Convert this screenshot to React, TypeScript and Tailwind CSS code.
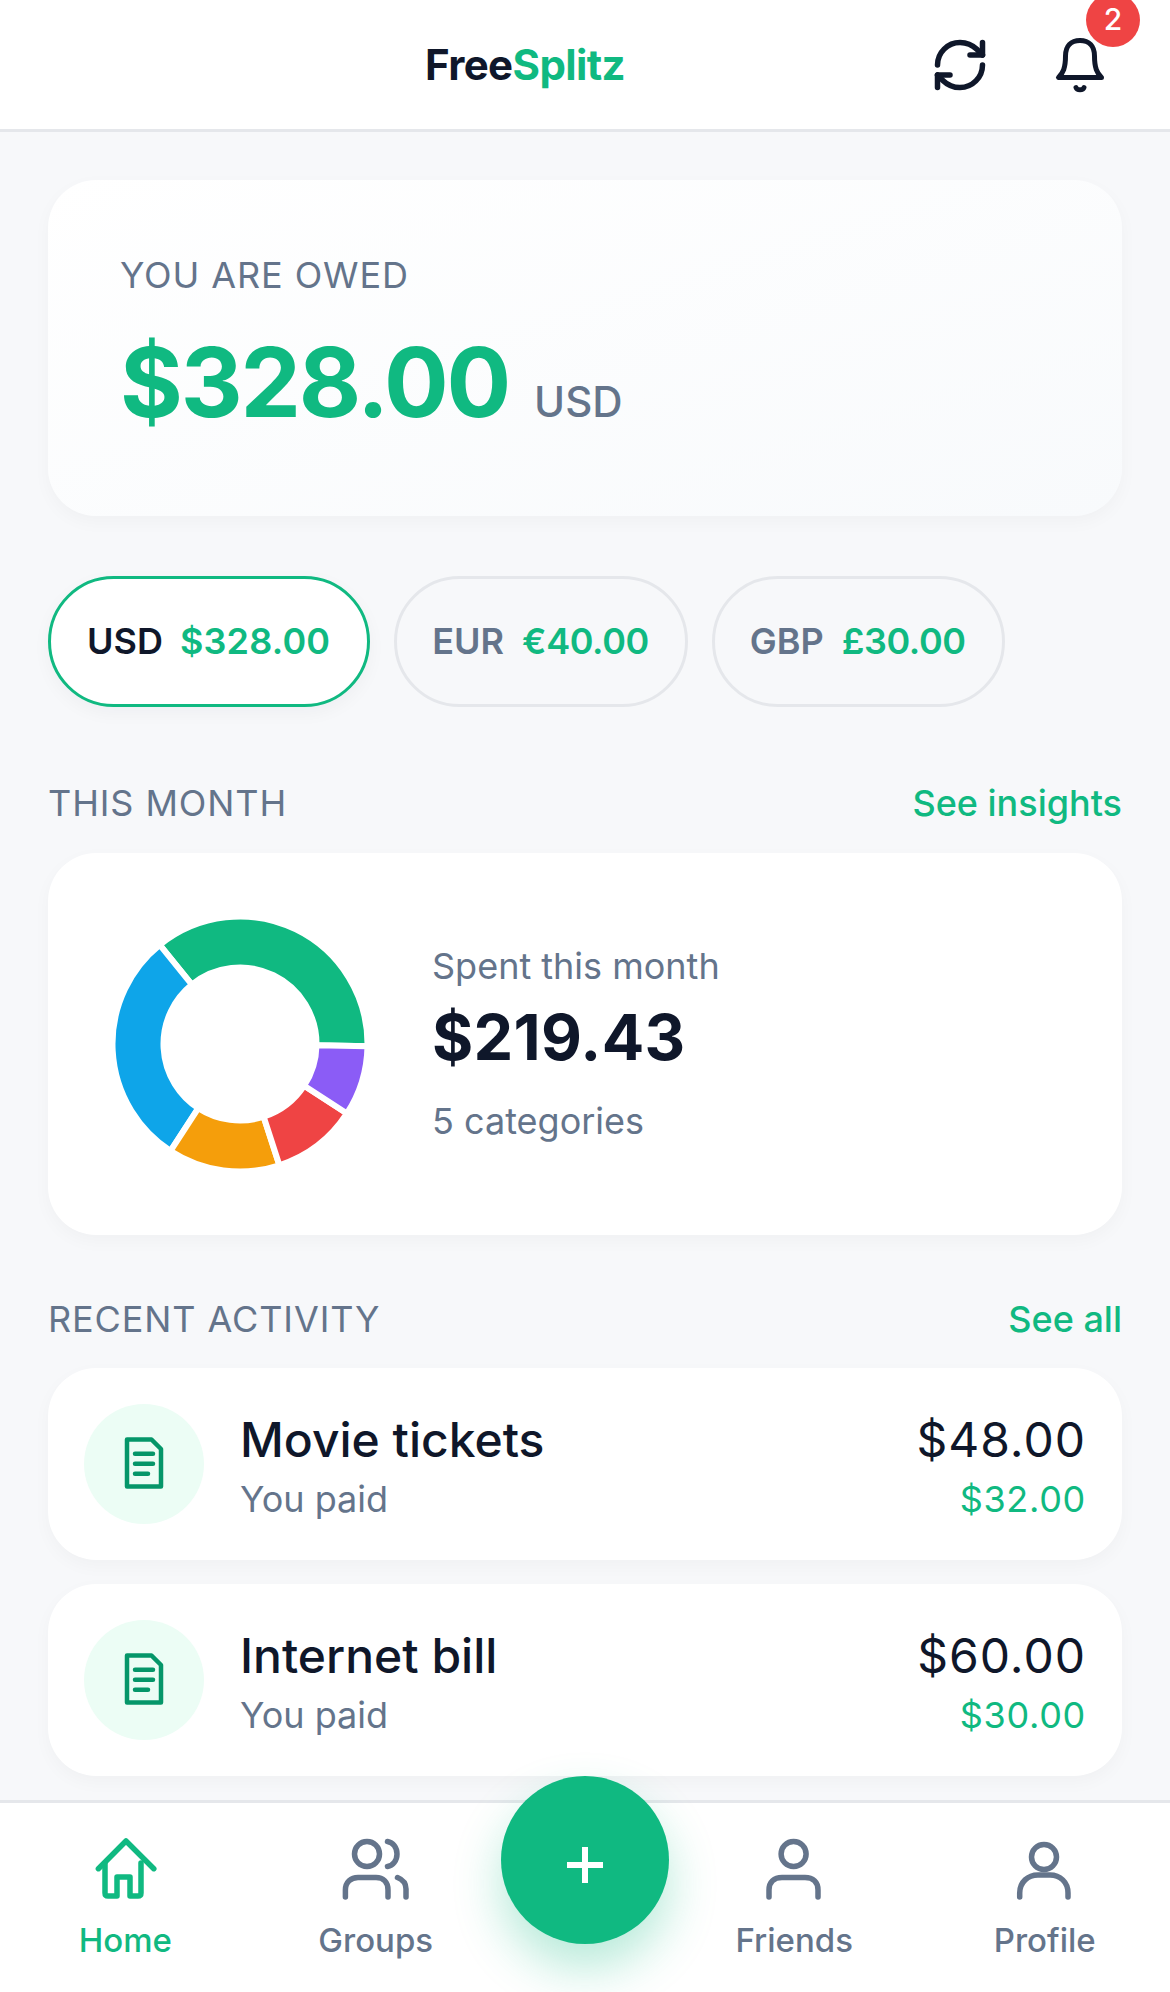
import React from "react";
import { RefreshCw } from "lucide-react";

const slices = [
  { from: -1, to: 129, color: "#10b981" },
  { from: 129, to: 237, color: "#0ea5e9" },
  { from: 237, to: 288, color: "#f59e0b" },
  { from: 288, to: 327, color: "#ef4444" },
  { from: 327, to: 359, color: "#8b5cf6" },
];

const activity = [
  { title: "Movie tickets", total: "$48.00", share: "$32.00" },
  { title: "Internet bill", total: "$60.00", share: "$30.00" },
];

// annular sector, angles counted counter-clockwise from east
function slicePath(from: number, to: number) {
  const c = 135;
  const R = 127.5;
  const r = 76.5;
  const pt = (rad: number, deg: number) => {
    const a = (deg * Math.PI) / 180;
    return `${(c + rad * Math.cos(a)).toFixed(2)} ${(c - rad * Math.sin(a)).toFixed(2)}`;
  };
  const large = to - from > 180 ? 1 : 0;
  return `M${pt(R, from)} A${R} ${R} 0 ${large} 0 ${pt(R, to)} L${pt(r, to)} A${r} ${r} 0 ${large} 1 ${pt(r, from)} Z`;
}

function Donut() {
  return (
    <svg width="270" height="270" viewBox="0 0 270 270" className="shrink-0">
      {slices.map((s) => (
        <path key={s.color} d={slicePath(s.from, s.to)} fill={s.color} stroke="#ffffff" strokeWidth="6" />
      ))}
    </svg>
  );
}

function BellIcon() {
  return (
    <svg width="66" height="66" viewBox="0 0 66 66" fill="none" stroke="#0f172a" strokeWidth="5" strokeLinecap="round" strokeLinejoin="round">
      <path d="M11.5 45.5H54.5C50 41 47.5 36 47.5 24C47.5 14 42 8.5 33 8.5C24 8.5 18.5 14 18.5 24C18.5 36 16 41 11.5 45.5Z" />
      <path d="M29 55.5C30 58.5 36 58.5 37 55.5" />
    </svg>
  );
}

function DocIcon() {
  return (
    <svg width="60" height="60" viewBox="0 0 60 60" fill="none" stroke="#059669" strokeWidth="4.5" strokeLinecap="round" strokeLinejoin="round">
      <path d="M13 5.5H37.5L47 15V52.5H13Z" />
      <path d="M21 19.7H39M21 29.7H39M21 39.7H34" />
    </svg>
  );
}

function HomeIcon() {
  return (
    <svg width="72" height="72" viewBox="0 0 72 72" fill="none" stroke="#10b981" strokeWidth="5.5" strokeLinecap="round" strokeLinejoin="round">
      <path d="M9.4 35.7L37 8L64.8 35.7" />
      <path d="M16 30V60Q16 63 19 63H28V44H41V63H49Q52 63 52 60V30" />
    </svg>
  );
}

function GroupsIcon() {
  return (
    <svg width="72" height="72" viewBox="0 0 72 72" fill="none" stroke="#64748b" strokeWidth="5.5" strokeLinecap="round" strokeLinejoin="round">
      <circle cx="27" cy="21" r="12.5" />
      <path d="M5.4 64V57C5.4 49 11 44.5 18 44.5H36C43 44.5 48 49 48 57V64" />
      <path d="M47.5 8.5C53 9.5 57 14.5 57 21C57 27.5 53 32.5 47.5 33.5" />
      <path d="M57.5 44.5C62.5 46.5 66 50.5 66 56V64" />
    </svg>
  );
}

function FriendIcon() {
  return (
    <svg width="72" height="72" viewBox="0 0 72 72" fill="none" stroke="#64748b" strokeWidth="5.5" strokeLinecap="round" strokeLinejoin="round">
      <circle cx="35.6" cy="21" r="12.5" />
      <path d="M11 64V57C11 49 16 44.5 24 44.5H47C55 44.5 60 49 60 57V64" />
    </svg>
  );
}

function ProfileIcon() {
  return (
    <svg width="72" height="72" viewBox="0 0 72 72" fill="none" stroke="#64748b" strokeWidth="5.5" strokeLinecap="round" strokeLinejoin="round">
      <circle cx="35" cy="24" r="12.5" />
      <path d="M10.7 64V60C10.7 49 19 42 29 42H41C51 42 59 49 59 60V64" />
    </svg>
  );
}

function CurrencyPill({ code, amount, active }: { code: string; amount: string; active?: boolean }) {
  return (
    <div
      className={
        active
          ? "h-[131px] flex items-center gap-[17px] pl-[36px] pr-[37px] pb-[2px] rounded-full border-[3px] border-[#10b981] bg-white shadow-[0_6px_18px_rgba(15,23,42,0.04)] text-[36px] font-semibold"
          : "h-[131px] flex items-center gap-[18px] pl-[35px] pr-[36px] pb-[2px] rounded-full border-[3px] border-[#e5e7eb] text-[36px] font-semibold"
      }
    >
      <span className={active ? "text-[#0f172a]" : "text-[#64748b]"}>{code}</span>
      <span className={active ? "text-[#10b981] tracking-[0.2px]" : "text-[#10b981] tracking-[-0.4px]"}>{amount}</span>
    </div>
  );
}

function SectionHead({ title, link }: { title: string; link: string }) {
  return (
    <div className="flex items-center justify-between leading-[48px] text-[36px]">
      <span className="text-[#64748b] tracking-[0.9px]">{title}</span>
      <span className="text-[#10b981] font-medium">{link}</span>
    </div>
  );
}

function NavItem({ label, icon, active }: { label: string; icon: React.ReactNode; active?: boolean }) {
  return (
    <div className="flex-1 flex flex-col items-center">
      {icon}
      <span className={active ? "mt-[11px] text-[33px] leading-[48px] font-medium text-[#10b981]" : "mt-[11px] text-[33px] leading-[48px] font-medium text-[#64748b]"}>
        {label}
      </span>
    </div>
  );
}

export default function App() {
  return (
    <div className="w-[1170px] h-[1992px] flex flex-col overflow-hidden bg-[#f7f8fa] font-[Inter,sans-serif]">
      <header className="h-[132px] shrink-0 flex items-center justify-between px-[48px] bg-white border-b-[3px] border-[#e5e7eb]">
        <div className="w-[84px]"></div>
        <div className="text-[42px] font-bold tracking-[-0.6px]">
          <span className="text-[#0f172a]">Free</span>
          <span className="text-[#10b981]">Splitz</span>
        </div>
        <div className="flex items-center gap-[36px]">
          <div className="w-[84px] h-[84px] flex items-center justify-center">
            <RefreshCw size={60} strokeWidth={2.2} color="#0f172a" />
          </div>
          <div className="relative w-[84px] h-[84px] flex items-center justify-center">
            <BellIcon />
            <div className="absolute top-[-30px] left-[48px] w-[54px] h-[54px] rounded-full bg-[#ef4444] flex items-center justify-center text-[30px] font-medium text-white">
              2
            </div>
          </div>
        </div>
      </header>

      <main className="flex-1 overflow-hidden px-[48px] pt-[48px]">
        <section className="rounded-[48px] bg-gradient-to-br from-white to-[#f8fafc] px-[72px] pt-[71px] pb-[54px] shadow-[0_6px_18px_rgba(15,23,42,0.03)]">
          <div className="text-[36px] leading-[48px] tracking-[0.9px] text-[#64748b]">YOU ARE OWED</div>
          <div className="mt-[23px] flex items-baseline gap-[25px] leading-[120px]">
            <span className="text-[96px] font-bold tracking-[-2.2px] text-[#10b981]">$328.00</span>
            <span className="text-[42px] font-medium text-[#64748b]">USD</span>
          </div>
        </section>

        <div className="mt-[60px] flex gap-[24px]">
          <CurrencyPill code="USD" amount="$328.00" active />
          <CurrencyPill code="EUR" amount="€40.00" />
          <CurrencyPill code="GBP" amount="£30.00" />
        </div>

        <div className="mt-[72px]">
          <SectionHead title="THIS MONTH" link="See insights" />
        </div>
        <section className="mt-[26px] h-[382px] rounded-[48px] bg-white shadow-[0_6px_18px_rgba(15,23,42,0.03)] flex items-center gap-[57px] px-[57px]">
          <Donut />
          <div className="pb-[2px]">
            <div className="text-[36px] leading-[48px] text-[#64748b]">Spent this month</div>
            <div className="mt-[5px] text-[63px] leading-[84px] font-bold tracking-[0.3px] text-[#0f172a]">$219.43</div>
            <div className="mt-[18px] text-[36px] leading-[48px] text-[#64748b]">5 categories</div>
          </div>
        </section>

        <div className="mt-[60px]">
          <SectionHead title="RECENT ACTIVITY" link="See all" />
        </div>
        <div className="mt-[25px] flex flex-col gap-[24px]">
          {activity.map((item) => (
            <div key={item.title} className="h-[192px] rounded-[48px] bg-white shadow-[0_6px_18px_rgba(15,23,42,0.03)] flex items-center px-[36px]">
              <div className="w-[120px] h-[120px] rounded-full bg-[#ecfdf5] flex items-center justify-center">
                <DocIcon />
              </div>
              <div className="ml-[36px] flex-1 pt-[5px]">
                <div className="text-[48px] leading-[60px] font-medium text-[#0f172a]">{item.title}</div>
                <div className="mt-[5px] text-[36px] leading-[48px] text-[#64748b]">You paid</div>
              </div>
              <div className="text-right pt-[5px]">
                <div className="text-[48px] leading-[60px] tracking-[1px] text-[#0f172a]">{item.total}</div>
                <div className="mt-[5px] text-[36px] leading-[48px] tracking-[0.7px] text-[#10b981]">{item.share}</div>
              </div>
            </div>
          ))}
        </div>
      </main>

      <nav className="relative h-[192px] shrink-0 flex bg-white border-t-[3px] border-[#e5e7eb] pt-[30px]">
        <NavItem label="Home" icon={<HomeIcon />} active />
        <NavItem label="Groups" icon={<GroupsIcon />} />
        <div className="w-[168px] shrink-0"></div>
        <NavItem label="Friends" icon={<FriendIcon />} />
        <NavItem label="Profile" icon={<ProfileIcon />} />
        <div className="absolute top-[-27px] left-[501px] w-[168px] h-[168px] rounded-full bg-[#10b981] shadow-[0_24px_48px_rgba(16,185,129,0.3)] flex items-center justify-center">
          <svg width="36" height="36" viewBox="0 0 36 36" className="mt-[10px]" stroke="#ffffff" strokeWidth="6">
            <path d="M0 18H36M18 0V36" />
          </svg>
        </div>
      </nav>
    </div>
  );
}
